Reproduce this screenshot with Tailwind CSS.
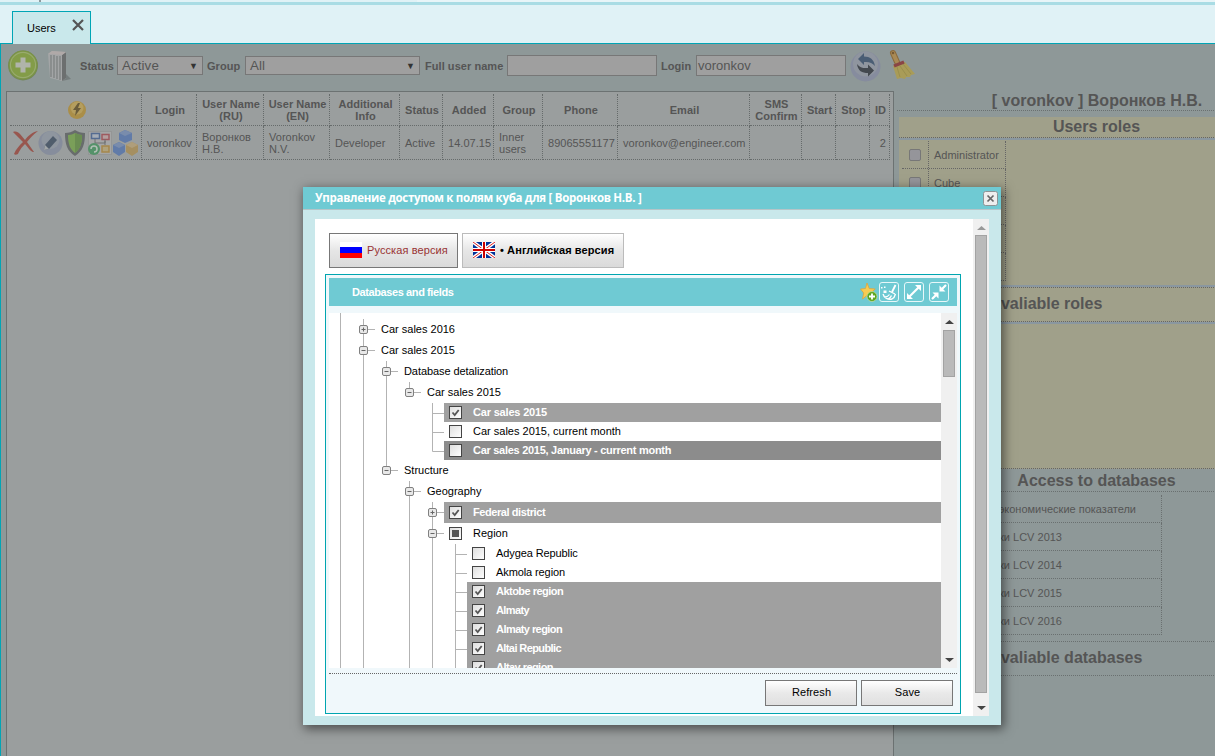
<!DOCTYPE html>
<html lang="ru">
<head>
    <meta charset="UTF-8">
    <meta name="viewport" content="width=device-width, initial-scale=1.0">
    <title>Users</title>
    <script src="https://cdn.jsdelivr.net/npm/@tailwindcss/browser@4"></script>
</head>
<body class="h-[756px] w-[1215px] overflow-hidden bg-[#e0f2f6] font-['Liberation_Sans',Arial,sans-serif] text-[11px] leading-[12px] text-[#555]">
<div class="relative flex h-[756px] flex-col">

    <!-- Tab strip -->
    <div class="flex h-[2px] shrink-0"><div class="ml-[39px] w-[2px] bg-[#8f9a9e]"></div><div class="ml-auto w-[798px] bg-[#e8f5f8]"></div></div>
    <div class="h-[3px] shrink-0 bg-[#a9dce4]"></div>
    <div class="relative flex h-[38px] shrink-0 items-end px-3">
        <div class="relative z-10 -mb-px flex h-[33px] w-[79px] border border-b-0 border-[#00a5b5] bg-[#c9e8eb] pt-[10px] pl-[14px] text-black">
            <span>Users</span>
            <svg class="absolute top-[7px] left-[59px] h-3 w-3" viewBox="0 0 12 12"><path d="M1 1l10 10M11 1L1 11" stroke="#555" stroke-width="2.2" fill="none"/></svg>
        </div>
    </div>

    <!-- Page content -->
    <div class="flex min-h-0 grow overflow-hidden border-t border-l border-[#00a5b5] bg-[#8e9898]">
        <div class="flex w-[893px] shrink-0 flex-col pl-[5px]">

            <!-- Filters -->
            <div class="flex h-[47px] shrink-0 items-start font-bold tracking-[0.05px] whitespace-nowrap">
                <svg class="mt-[5px] ml-[2px] h-8 w-8 shrink-0" viewBox="0 0 32 32">
                    <circle cx="15" cy="16.500" r="15" fill="#74875a"/><circle cx="15" cy="16" r="14.500" fill="#7b9446"/><circle cx="15" cy="16" r="13.200" fill="#98ab6e"/><circle cx="15" cy="16" r="12" fill="#839c48"/>
                    <path d="M12.500 8.500h5v5h5v5h-5v5h-5v-5h-5v-5h5z" fill="#b0b4aa"/>
                </svg>
                <svg class="mt-[6px] ml-[7px] h-8 w-6 shrink-0" viewBox="0 0 24 32">
                    <path d="M15 31l9-2-5-5z" fill="#757d7d"/>
                    <path d="M1 4l4-3 14 1v26l-4 3L3 28z" fill="#a3a5a6"/><path d="M15 5l4-3v26l-4 3z" fill="#6c6f6f"/>
                    <path d="M4 5v22M7 5v23M10 6v23M13 6v24" stroke="#7d8181" stroke-width="1.300"/><path d="M1 4l4-3 14 1-4 3z" fill="#b0a9a8"/>
                </svg>
                <label class="mt-[16px] ml-[9px] w-[33px] shrink-0">Status</label>
                <div class="mt-[12px] ml-[4px] flex h-[19px] w-[86px] shrink-0 items-center border border-[#777] bg-[#9f9f9f] pl-[4px] text-[13.33px] font-normal tracking-[0.1px]">Active<span class="ml-auto pr-[4px] text-[9px] tracking-normal text-[#333]">▼</span></div>
                <label class="mt-[16px] ml-[4px] w-[34px] shrink-0">Group</label>
                <div class="mt-[12px] ml-[4px] flex h-[19px] w-[175px] shrink-0 items-center border border-[#777] bg-[#9f9f9f] pl-[4px] text-[13.33px] font-normal tracking-[0.1px]">All<span class="ml-auto pr-[4px] text-[9px] tracking-normal text-[#333]">▼</span></div>
                <label class="mt-[16px] ml-[5px] w-[78px] shrink-0">Full user name</label>
                <div class="mt-[11px] ml-[4px] h-[21px] w-[150px] shrink-0 border border-[#777] bg-[#9f9f9f]"></div>
                <label class="mt-[16px] ml-[4px] w-[31px] shrink-0">Login</label>
                <div class="mt-[11px] ml-[4px] flex h-[21px] w-[150px] shrink-0 items-center border border-[#777] bg-[#9f9f9f] pl-[1px] text-[13px] font-normal tracking-normal">voronkov</div>
                <svg class="mt-[6px] ml-[4px] h-8 w-[31px] shrink-0" viewBox="0 0 31 32">
                    <circle cx="15.500" cy="16.500" r="15" fill="#868c9e"/><circle cx="15.500" cy="14" r="12.500" fill="#8f959f"/>
                    <path d="M8 9l6-6v3.500c6 0 10 3 11 9.500-3-3.500-6-4.500-11-4V15z" fill="#4a5d74"/><path d="M24 20.500l-6 6V23c-6 0-10-2-11-9 3 3.500 6 4.500 11 4v-3.500z" fill="#43484f"/>
                </svg>
                <svg class="mt-[4px] ml-[6px] h-8 w-[30px] shrink-0" viewBox="0 0 30 32">
                    <path d="M6 5l4 9" stroke="#8a6a3c" stroke-width="6" stroke-linecap="round"/><path d="M6 5l4 9" stroke="#a98a55" stroke-width="4" stroke-linecap="round"/><circle cx="6" cy="5" r="1.300" fill="#775a34"/>
                    <path d="M6 18l12-4 10 12-4 1-1 2-4 0-1 2-4-1-4 1z" fill="#a99c58"/><path d="M10 19l3 10M13 18l7 10M16 16l8 10" stroke="#9a8e4e" stroke-width="1"/><path d="M7 18l10-4" stroke="#8a4545" stroke-width="3.500"/>
                </svg>
            </div>

            <!-- Users list -->
            <div class="w-[888px] grow border border-b-0 border-[#6c7272] bg-[#9a9e9e] pt-[2px] pl-[3px]">
                <div id="usersTable" class="grid w-[880px] grid-cols-[132px_55px_67px_66px_70px_43px_51px_49px_75px_132px_52px_34px_34px_20px] grid-rows-[32px_34px] tracking-[0.03px]"></div>
            </div>
        </div>

        <!-- Roles and databases -->
        <div class="w-[400px] shrink-0 pt-[46px] pl-[3px]">
            <div class="h-[21px] border-b border-dotted border-[#6a7070] pl-[3px] text-center text-[16px] leading-[22px] font-bold">[ voronkov ] Воронков Н.В.</div>
            <div class="mt-[6px] ml-[2px] bg-[#8a97a0]">
                <h2 class="h-[21px] border-b border-dotted border-[#666] bg-[#a0a08a] text-center text-[16px] leading-[19px] font-bold">Users roles</h2>
                <div id="roles" class="mt-[2px] h-[145px] bg-[#a0a08a] pt-[1px] pl-[3px]"></div>
                <h2 class="mt-[2px] h-[35px] border-y border-dotted border-[#666] bg-[#a0a08a] pl-[91px] text-[16px] leading-[32px] font-bold">Avaliable roles</h2>
                <div class="mt-[2px] h-[145px] border-b border-dotted border-[#666] bg-[#a0a08a]"></div>
            </div>
            <h2 class="ml-[2px] h-[23px] border-b border-dotted border-[#6a7070] text-center text-[16px] leading-[23px] font-bold">Access to databases</h2>
            <div id="databases" class="mt-[3px] ml-[2px] w-[263px]"></div>
            <h2 class="mt-[6px] ml-[2px] h-[35px] border-y border-dotted border-[#6a7070] pl-[91px] text-[16px] leading-[32px] font-bold">Avaliable databases</h2>
        </div>
    </div>

    <!-- Access dialog -->
    <div class="absolute top-[187px] left-[303px] flex h-[538px] w-[698px] flex-col bg-[#c9e8eb] shadow-[2px_3px_10px_1px_rgba(0,0,0,0.5)]">
        <div class="flex h-[23px] shrink-0 items-center justify-between border-b border-[#b5c5c8] bg-[#6fcad3] pr-[3px] pl-[12px]">
            <span class="font-['Open_Sans',sans-serif] text-[11.5px] font-bold tracking-[-0.3px] whitespace-nowrap text-white">Управление доступом к полям куба для [ Воронков Н.В. ]</span>
            <svg class="h-[15px] w-[15px]" viewBox="0 0 15 15"><rect x=".5" y=".5" width="14" height="14" rx="2" fill="#eee" stroke="#8d9496"/><path d="M4.500 4.500l6 6M10.500 4.500l-6 6" stroke="#666" stroke-width="1.700"/></svg>
        </div>
        <div class="mt-[9px] ml-[12px] flex h-[497px] w-[674px] bg-white">
            <div class="flex grow flex-col pt-[14px] pl-[10px]">
                <div class="flex gap-[4px] pl-[4px]">
                    <div class="flex h-[35px] w-[129px] items-center border border-[#777] bg-linear-to-b from-white via-[#e6e6e6] to-[#dadada] pb-[1px] pl-[10px]">
                        <svg class="h-4 w-[22px]" viewBox="0 0 22 16"><path fill="#fff" d="M0 0h22v5H0z"/><path fill="#00f" d="M0 5h22v6H0z"/><path fill="#f00" d="M0 11h22v5H0z"/></svg>
                        <span class="ml-[5px] tracking-[0.1px] whitespace-nowrap text-[#993333]">Русская версия</span>
                    </div>
                    <div class="flex h-[35px] w-[162px] items-center border border-[#bbb] bg-linear-to-b from-white via-[#e6e6e6] to-[#dadada] pb-[1px] pl-[10px]">
                        <svg class="h-4 w-[22px]" viewBox="0 0 22 16"><path fill="#039" d="M0 0h22v16H0z"/><path d="M0 0l22 16M22 0L0 16" stroke="#fff" stroke-width="3.500"/><path d="M0 0l22 16M22 0L0 16" stroke="#d22" stroke-width="1"/><path d="M11 0v16M0 8h22" stroke="#fff" stroke-width="4"/><path d="M11 0v16M0 8h22" stroke="#c00" stroke-width="2"/></svg>
                        <span class="ml-[5px] font-bold tracking-[0.1px] whitespace-nowrap text-black">• Английская версия</span>
                    </div>
                </div>

                <div class="mt-[6px] flex h-[440px] w-[636px] flex-col border border-[#00a5b0] bg-[#f0f8fb] p-[3px]">
                    <div class="flex h-[28px] shrink-0 items-center bg-[#6fcad3] pr-[8px] pl-[23px]">
                        <span class="font-bold tracking-[-0.4px] text-white">Databases and fields</span>
                        <div class="ml-auto flex h-[20px] items-center pb-[1px]">
                            <svg class="mr-[1px] h-5 w-[18px]" viewBox="0 0 18 20"><path d="M7 1l2.200 5.500 6 .5-4.500 4 1.500 6L7 13.500 2.500 17l1.200-6L.500 7l5-.5z" fill="#f8cc52" stroke="#dfa43c" stroke-width=".8"/><circle cx="12" cy="14.500" r="5" fill="#5ea620" stroke="#c9e3a6" stroke-width=".7"/><path d="M12 11.500v6M9 14.500h6" stroke="#fff" stroke-width="1.800"/></svg>
                            <svg class="h-5 w-5" viewBox="0 0 20 20" fill="none"><rect x=".5" y=".5" width="19" height="19" rx="2.500" stroke="#e7f7f9"/><path d="M16.500 3l-3.500 7" stroke="#fff" stroke-width="1.800"/><path d="M10 9l6 3M4 12c1 4 5 6 9 5 2-1 3-3 3.500-5M5.500 15c2 0 4-1 5-2.500M9 17c2-1 3-2 3.500-3.500" stroke="#fff" stroke-width="1.300"/><path d="M2 5h1.500v1.500H2zM4.500 8.500h3v2.500h-3zM5 4.500h1.500V6H5z" fill="#fff"/></svg>
                            <svg class="ml-[5px] h-5 w-5" viewBox="0 0 20 20"><rect x=".5" y=".5" width="19" height="19" rx="2.500" fill="none" stroke="#e7f7f9"/><path d="M5 15L15 5" stroke="#fff" stroke-width="2.200"/><path d="M11 3h6v6zM3 11v6h6z" fill="#fff"/></svg>
                            <svg class="ml-[5px] h-5 w-5" viewBox="0 0 20 20"><rect x=".5" y=".5" width="19" height="19" rx="2.500" fill="none" stroke="#e7f7f9"/><path d="M3 17l5-5M17 3l-5 5" stroke="#fff" stroke-width="2.200"/><path d="M3.500 10.500h6v6zM10.500 3.500v6h6z" fill="#fff"/></svg>
                        </div>
                    </div>
                    <div class="mt-[7px] flex h-[355px] shrink-0 overflow-hidden bg-white">
                        <div id="tree" class="w-[612px] text-black"></div>
                        <div class="flex w-4 flex-col items-center bg-[#f0f0f0]">
                            <svg class="h-[17px] w-4 shrink-0" viewBox="0 0 16 17"><path d="M4 11l4.500-4L13 11z" fill="#444"/></svg>
                            <div class="h-[47px] w-[12px] shrink-0 border border-[#a3a3a3] bg-[#bababa]"></div>
                            <svg class="mt-auto h-[17px] w-4 shrink-0" viewBox="0 0 16 17"><path d="M4 7l4.500 4L13 7z" fill="#444"/></svg>
                        </div>
                    </div>
                    <div class="mt-[5px] flex h-[34px] justify-end gap-[4px] border-t border-dotted border-[#666] pt-[6px] pr-[4px] text-black">
                        <button class="h-[26px] w-[92px] border border-[#777] bg-linear-to-b from-white via-[#e9e9e9] to-[#e0e0e0] pb-[2px] pl-[1px] tracking-[0.1px]">Refresh</button>
                        <button class="h-[26px] w-[92px] border border-[#777] bg-linear-to-b from-white via-[#e9e9e9] to-[#e0e0e0] pb-[2px] pl-[1px] tracking-[0.1px]">Save</button>
                    </div>
                </div>
            </div>
            <div class="flex w-4 shrink-0 flex-col items-center bg-[#f0f0f0]">
                <svg class="h-[16px] w-4 shrink-0" viewBox="0 0 16 16"><path d="M4 11l4.500-4L13 11z" fill="#999"/></svg>
                <div class="w-[12px] grow border border-[#a3a3a3] bg-[#bababa]"></div>
                <svg class="h-[23px] w-4 shrink-0" viewBox="0 0 16 23"><path d="M4 13l4.500 4L13 13z" fill="#444"/></svg>
            </div>
        </div>
    </div>
</div>

<template id="actionIcons">
    <svg class="h-7 w-[127px] opacity-80" viewBox="0 0 127 28">
        <path d="M1 3c3-1 5 0 7 2l5 6c3-4 7-8 13-9-5 4-8 7-11 11l7 10c-3 0-4-2-9-8-4 4-5 6-7 10-2 1-3 1-4 0 2-5 5-8 9-12z" fill="#98453b"/>
        <circle cx="38.500" cy="14" r="12" fill="#828a9c"/><circle cx="38.500" cy="11" r="9" fill="#8d95a0"/><path d="M32 21l1-5 8-9 4 4-8 9z" fill="#3e4d60"/><path d="M32 21l1-5 4 4z" fill="#a5a9ab"/>
        <path d="M53 4c4 0 7-1 10-3 3 2 6 3 10 3 0 11-2 18-10 23-8-5-10-12-10-23z" fill="#5c6060"/><path d="M56 6c3 0 5-1 7-2 3 1 4 2 7 2 0 9-2 14-7 18-5-4-7-9-7-18z" fill="#73a048"/><path d="M63 4c3 1 4 2 7 2 0 9-2 14-7 18z" fill="#5f8a40"/>
        <rect x="76.500" y="2.500" width="23" height="23" fill="#a8a9a9" stroke="#939595"/><path d="M79.500 4.500h8v5h-8z" fill="#a9b1bd" stroke="#45608f" stroke-width="1.500"/><path d="M90 5.500h7v5h-7z" fill="#bba0a0" stroke="#a04a50" stroke-width="1.500"/><path d="M90 17h7v6h-7z" fill="#b5a374" stroke="#a88338" stroke-width="1.500"/><path d="M83 10v4h10v-4M93 12v4" stroke="#666" fill="none"/><circle cx="82" cy="20" r="6" fill="#45905e"/><path d="M79 20a3 3 0 1 1 3 3" stroke="#b8c8bc" stroke-width="1.500" fill="none"/>
        <path d="M107 4l6-3 7 3v7l-7 3-6-3z" fill="#5473ab"/><path d="M107 4l6-3 7 3-7 3z" fill="#7188b0"/><path d="M101 16l6-3 6 3v7l-6 4-6-4z" fill="#5473ab"/><path d="M101 16l6-3 6 3-6 3z" fill="#7188b0"/><path d="M114 16l6-3 6 3v7l-6 4-6-4z" fill="#a88c52"/><path d="M114 16l6-3 6 3-6 3z" fill="#b59f73"/>
    </svg>
</template>

<script>
    // Users list
    const head = ['', 'Login', 'User Name (RU)', 'User Name (EN)', 'Additional Info', 'Status', 'Added', 'Group', 'Phone', 'Email', 'SMS Confirm', 'Start', 'Stop', 'ID'];
    const user = ['', 'voronkov', 'Воронков<br>Н.В.', 'Voronkov<br>N.V.', 'Developer', 'Active', '14.07.15', 'Inner<br>users', '89065551177', 'voronkov@engineer.com', '', '', '', '2'];
    const bolt = '<svg class="h-5 w-5" viewBox="0 0 20 20"><circle cx="10" cy="10" r="9" fill="#aa8e48"/><circle cx="10" cy="8" r="6.500" fill="#b59e5e"/><path d="M11 3l-5 7h3l-1 6 6-8h-3l2-5z" fill="#6a5c3a"/></svg>';
    let cells = '';
    head.forEach((text, i) => {
        cells += `<div class="flex items-center justify-center border-r border-b border-dotted border-[#666b6b] pl-[2px] text-center font-bold">${i ? `<span>${text}</span>` : bolt}</div>`;
    });
    user.forEach((text, i) => {
        const body = i ? text : document.getElementById('actionIcons').innerHTML;
        const pad = i === 0 ? 'pl-[2px]' : i === 13 ? 'justify-end pr-[3px]' : 'pl-[5px]';
        cells += `<div class="flex items-center border-r border-b border-dotted border-[#666b6b] whitespace-nowrap ${pad}">${body}</div>`;
    });
    document.getElementById('usersTable').innerHTML = cells;

    // Right column
    document.getElementById('roles').innerHTML = ['Administrator', 'Cube', '', '', ''].map(name =>
        `<div class="flex h-[28px] w-[104px] border-r border-b border-dotted border-[#666]">
            <div class="flex w-[27px] items-center justify-center border-r border-dotted border-[#666]"><div class="h-[12px] w-[12px] rounded-[2px] border border-[#777] bg-[#95959a]"></div></div>
            <div class="pl-[5px] leading-[28px]">${name}</div>
        </div>`).join('');
    document.getElementById('databases').innerHTML = ['Социально-экономические показатели', 'Легковушки LCV 2013', 'Легковушки LCV 2014', 'Легковушки LCV 2015', 'Легковушки LCV 2016'].map((name, i) =>
        `<div class="flex h-[28px] items-center justify-end border-r border-b border-dotted border-[#6a7070] whitespace-nowrap ${i ? 'pr-[99px]' : 'pr-[25px]'}">${name}</div>`).join('');

    // Tree rows: guides (one letter per 23px column), label, checkbox, background and spacing
    // | line, . empty, + closed, - opened, e opened last, t leaf, l last leaf
    const rows = [
        ['|+', 'Car sales 2016'],
        ['|-', 'Car sales 2015'],
        ['||-', 'Database detalization', '', 'tracking-[-0.08px]'],
        ['|||e', 'Car sales 2015'],
        ['|||.t', 'Car sales 2015', 'on', 'bg-[#a0a0a0] tracking-[-0.18px]'],
        ['|||.t', 'Car sales 2015, current month', 'off'],
        ['|||.l', 'Car sales 2015, January - current month', 'off', 'bg-[#8c8c8c] tracking-[-0.28px]'],
        ['||e', 'Structure'],
        ['||.-', 'Geography'],
        ['||.|+', 'Federal district', 'on', 'bg-[#a0a0a0] tracking-[-0.42px]'],
        ['||.|-', 'Region', 'part'],
        ['||.||t', 'Adygea Republic', 'off', 'tracking-[-0.1px]'],
        ['||.||t', 'Akmola region', 'off', 'tracking-[-0.1px]'],
        ['||.||t', 'Aktobe region', 'on', 'bg-[#a0a0a0] tracking-[-0.52px]'],
        ['||.||t', 'Almaty', 'on', 'bg-[#a0a0a0] tracking-[-0.6px]'],
        ['||.||t', 'Almaty region', 'on', 'bg-[#a0a0a0] tracking-[-0.55px]'],
        ['||.||t', 'Altai Republic', 'on', 'bg-[#a0a0a0] tracking-[-0.6px]'],
        ['||.||t', 'Altay region', 'on', 'bg-[#a0a0a0] tracking-[-0.55px]'],
    ];

    function guide(c, h) {
        const full = `<path d="M11.500 0v${h}"/>`;
        const half = '<path d="M11.500 0v10.500"/>';
        const arm = '<path d="M11.500 10.500H23"/>';
        const box = '<rect x="7.500" y="6.500" width="8" height="8" rx="1.500" fill="#e8e8e8" stroke="#808080"/><path d="M9.500 10.500h4" stroke="#666"/>';
        const shapes = {
            '|': full, '.': '', 't': full + arm, 'l': half + arm,
            '-': full + arm + box, 'e': half + arm + box,
            '+': full + arm + box + '<path d="M11.500 8.500v4" stroke="#666"/>',
        };
        return `<svg class="w-[23px] shrink-0" height="${h}" viewBox="0 0 23 ${h}" fill="none" stroke="#b3b3b3">${shapes[c]}</svg>`;
    }

    function check(state) {
        const mark = {
            on: '<path d="M3.500 6.500l2.200 2.500 4-5" fill="none" stroke="#555" stroke-width="1.800"/>',
            off: '',
            part: '<path d="M3 3h7v7H3z" fill="#555"/>',
        };
        return `<svg class="mr-[11px] ml-[5px] h-[13px] w-[13px] shrink-0" viewBox="0 0 13 13"><rect x=".5" y=".5" width="12" height="12" fill="url(#face)" stroke="#444"/>${mark[state]}</svg>`;
    }

    let tree = `<svg class="block h-[6px] w-[23px]" viewBox="0 0 23 6"><defs><linearGradient id="face" x2="1" y2="1"><stop stop-color="#ddd"/><stop offset="1" stop-color="#fff"/></linearGradient></defs><path d="M11.500 0v6" stroke="#b3b3b3"/></svg>`;
    rows.forEach(([guides, label, state, look = '']) => {
        const leaf = /[tl]$/.test(guides);
        tree += `<div class="flex ${leaf ? 'h-[19px]' : 'h-[21px]'}">
            ${[...guides].map(c => guide(c, leaf ? 19 : 21)).join('')}
            <div class="flex grow items-center whitespace-nowrap ${look} ${look.startsWith('bg') ? 'font-bold text-white' : ''}">${state ? check(state) : '<span class="w-[6px]"></span>'}<span class="pb-[2px]">${label}</span></div>
        </div>`;
    });
    document.getElementById('tree').innerHTML = tree;
</script>
</body>
</html>
